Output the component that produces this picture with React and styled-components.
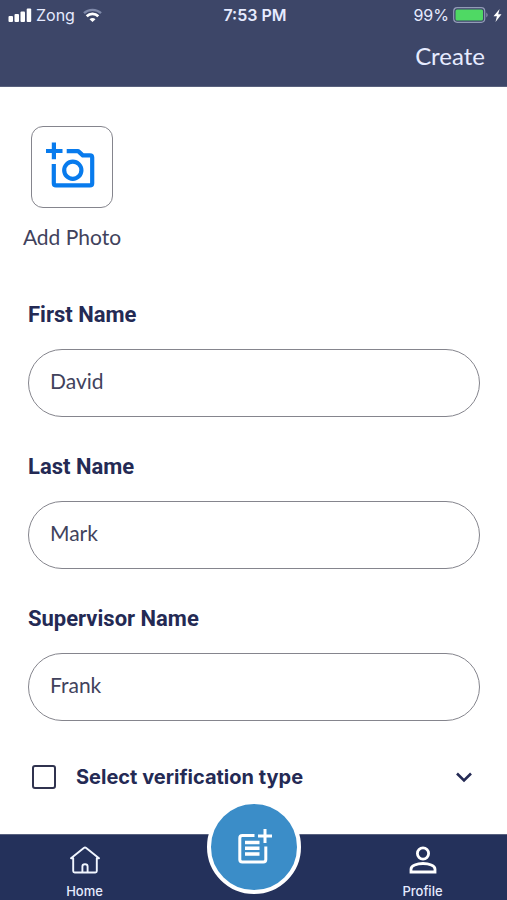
import React from "react";
import styled, { createGlobalStyle } from "styled-components";

const GlobalStyle = createGlobalStyle`
  *, *::before, *::after { box-sizing: border-box; }
  body {
    margin: 0;
    background: #ffffff;
    color: #41425c;
    font-family: Inter, "Liberation Sans", sans-serif;
  }
  button, input { font: inherit; color: inherit; }
`;

const Screen = styled.div`
  min-height: 100vh;
  display: flex;
  flex-direction: column;
`;

const Header = styled.header`
  background: #3d4668;
  color: #e6ebff;
  padding-bottom: 12px;
  border-bottom: 1px solid #59617d;
`;

const StatusBar = styled.div`
  display: grid;
  grid-template-columns: 1fr auto 1fr;
  align-items: center;
  height: 30px;
  padding: 0 5px 0 8px;
  font-size: 16px;
  line-height: 20px;
`;

const StatusGroup = styled.div`
  display: flex;
  align-items: center;
  justify-content: ${(p) => (p.$end ? "flex-end" : "flex-start")};
  gap: 4px;
`;

const Clock = styled.time`
  font-weight: 600;
`;

const WifiSlot = styled.span`
  display: flex;
  padding-left: 4px;
`;

const TitleBar = styled.div`
  display: flex;
  justify-content: flex-end;
  align-items: center;
  height: 44px;
  padding: 8px 22px 0;
`;

const CreateButton = styled.button`
  border: 0;
  padding: 0;
  background: none;
  font-family: Lato, sans-serif;
  font-size: 24px;
  line-height: 28px;
  cursor: pointer;
`;

const Form = styled.form`
  flex: 1;
  padding: 39px 27px 24px 28px;
`;

const PhotoButton = styled.button`
  display: flex;
  flex-direction: column;
  align-items: center;
  gap: 17px;
  width: 98px;
  margin-left: -5px;
  padding: 0;
  border: 0;
  background: none;
  font-family: Lato, sans-serif;
  font-size: 21px;
  line-height: 24px;
  white-space: nowrap;
  cursor: pointer;
`;

const PhotoFrame = styled.span`
  display: grid;
  place-items: center;
  width: 82px;
  height: 82px;
  border: 1px solid #85858d;
  border-radius: 12px;
`;

const Fields = styled.div`
  display: flex;
  flex-direction: column;
  gap: 36px;
  padding-top: 52px;
`;

const Field = styled.div`
  display: flex;
  flex-direction: column;
  gap: 20px;
`;

const FieldLabel = styled.label`
  color: #242a54;
  font-family: Roboto, sans-serif;
  font-size: 22px;
  font-weight: 700;
  line-height: 28px;
`;

const TextInput = styled.input`
  width: 100%;
  height: 68px;
  padding: 0 21px 6px;
  border: 1px solid #85858d;
  border-radius: 34px;
  background: #ffffff;
  font-family: Lato, sans-serif;
  font-size: 21px;
`;

const VerificationRow = styled.div`
  display: flex;
  align-items: center;
  justify-content: space-between;
  margin-top: 43px;
  padding: 0 7px 0 4px;
  color: #242a54;
`;

const CheckLabel = styled.label`
  display: flex;
  align-items: center;
  gap: 20px;
  font-size: 20px;
  font-weight: 700;
  line-height: 26px;
`;

const Checkbox = styled.input`
  appearance: none;
  width: 24px;
  height: 24px;
  margin: 0;
  border: 2px solid #30334f;
  border-radius: 3px;
  &:checked { background: #30334f; }
`;

const ExpandButton = styled.button`
  display: flex;
  padding: 0;
  border: 0;
  background: none;
  cursor: pointer;
`;

const BottomNav = styled.nav`
  position: sticky;
  bottom: 0;
  display: grid;
  grid-template-columns: repeat(3, 1fr);
  height: 66px;
  background: #24315b;
  border-top: 1px solid #58617f;
`;

const NavLink = styled.a`
  display: flex;
  flex-direction: column;
  align-items: center;
  gap: 9px;
  padding-top: 11px;
  color: #e6ebff;
  font-size: 13px;
  font-weight: 500;
  line-height: 16px;
  text-decoration: none;
`;

const AddButton = styled.button`
  display: grid;
  place-items: center;
  justify-self: center;
  width: 94px;
  height: 94px;
  margin-top: -35px;
  padding: 0;
  border: 4px solid #ffffff;
  border-radius: 50%;
  background: #3b8dc8;
  cursor: pointer;
`;

const SignalIcon = () => (
  <svg width="24" height="14" viewBox="0 0 24 14" fill="#fff" aria-hidden="true">
    <rect x="0.5" y="8" width="4.5" height="6" rx="1" />
    <rect x="6.5" y="6" width="4.5" height="8" rx="1" />
    <rect x="12.5" y="3.5" width="4.5" height="10.5" rx="1" />
    <rect x="18.7" y="0.5" width="4.5" height="13.5" rx="1" />
  </svg>
);

const WifiIcon = () => (
  <svg width="19" height="14" viewBox="0 0 19 14" fill="none" strokeWidth="2.4" aria-hidden="true">
    <path d="M1 5.1C5.7 .8 13.3 .8 18 5.1" stroke="#7f89a9" />
    <path d="M3.700 8.200c3.200-3 8.400-3 11.600 0" stroke="#fff" strokeWidth="2.800" />
    <path d="M6.500 11.200c1.700-1.500 4.300-1.500 6 0L9.500 14z" fill="#fff" />
  </svg>
);

const BatteryIcon = () => (
  <svg width="36" height="16" viewBox="0 0 36 16" aria-hidden="true">
    <rect x="0.7" y="0.7" width="31" height="14.6" rx="3.5" fill="none" stroke="#929bb7" strokeWidth="1.2" />
    <rect x="2.5" y="2.5" width="27.5" height="11" rx="1.5" fill="#4fd964" />
    <path d="M33.5 5.5q2 2.5 0 5z" fill="#a5adc5" />
  </svg>
);

const BoltIcon = () => (
  <svg width="9" height="13" viewBox="0 0 9 13" fill="#fff" aria-hidden="true">
    <path d="M6.6 0 .5 7.3h3.4L2.500 13l6-7.700H5.200z" />
  </svg>
);

const CameraPlusIcon = () => (
  <svg width="52" height="50" viewBox="0 0 52 50" fill="none" stroke="#087bed" strokeWidth="4.2" aria-hidden="true">
    <path d="M0 9h16.500M7.900.6v16.600" />
    <path d="M20.700 9.100h11.500l4.600 4.300H44q2.200 0 2.200 2.200v25.600q0 2.200-2.200 2.200H10q-2.200 0-2.200-2.200V22" strokeLinejoin="round" />
    <circle cx="26.800" cy="28.200" r="8.600" />
  </svg>
);

const ChevronIcon = () => (
  <svg width="18" height="12" viewBox="0 0 18 12" fill="none" stroke="#242a54" strokeWidth="2.6" aria-hidden="true">
    <path d="M2 2.500l7 7 7-7" />
  </svg>
);

const HomeIcon = () => (
  <svg width="30" height="28" viewBox="0 0 30 28" fill="none" stroke="#f1f6ff" strokeWidth="1.9" strokeLinecap="round" strokeLinejoin="round" aria-hidden="true">
    <path d="M1 12.200h2.200V25q0 1.500 1.500 1.500h20.600q1.500 0 1.500-1.500V12.200H29L16.200 2q-1.200-.9-2.400 0z" />
    <path d="M12.400 26v-5.500q0-2.300 2.600-2.300t2.600 2.300V26" />
  </svg>
);

const ProfileIcon = () => (
  <svg width="28" height="28" viewBox="0 0 28 28" fill="none" stroke="#fff" strokeWidth="2.8" aria-hidden="true">
    <circle cx="14" cy="7.500" r="5.600" />
    <path d="M2 26v-2.800c0-3.500 6-5.700 12-5.700s12 2.200 12 5.700V26z" />
  </svg>
);

const PostAddIcon = () => (
  <svg width="36" height="38" viewBox="0 -2 36 38" fill="none" stroke="#fff" strokeWidth="3" aria-hidden="true">
    <path d="M18.500 5.500H6.300q-2.500 0-2.500 2.500v21.500q0 2.500 2.500 2.500h21q2.500 0 2.500-2.500V16.500" />
    <path d="M22 6h14M29 -1v14" />
    <path d="M9 12.500h14.500M9 18.200h14.500M9 24h14.500" strokeWidth="3.600" />
  </svg>
);

const FIELDS = [
  { id: "first-name", label: "First Name", value: "David" },
  { id: "last-name", label: "Last Name", value: "Mark" },
  { id: "supervisor-name", label: "Supervisor Name", value: "Frank" },
];

export default function App() {
  return (
    <Screen>
      <GlobalStyle />
      <Header>
        <StatusBar>
          <StatusGroup>
            <SignalIcon />
            <span>Zong</span>
            <WifiSlot><WifiIcon /></WifiSlot>
          </StatusGroup>
          <Clock>7:53 PM</Clock>
          <StatusGroup $end>
            <span>99%</span>
            <BatteryIcon />
            <BoltIcon />
          </StatusGroup>
        </StatusBar>
        <TitleBar>
          <CreateButton type="submit" form="profile-form">Create</CreateButton>
        </TitleBar>
      </Header>
      <Form id="profile-form" onSubmit={(e) => e.preventDefault()}>
        <PhotoButton type="button">
          <PhotoFrame><CameraPlusIcon /></PhotoFrame>
          Add Photo
        </PhotoButton>
        <Fields>
          {FIELDS.map((f) => (
            <Field key={f.id}>
              <FieldLabel htmlFor={f.id}>{f.label}</FieldLabel>
              <TextInput id={f.id} type="text" defaultValue={f.value} />
            </Field>
          ))}
        </Fields>
        <VerificationRow>
          <CheckLabel>
            <Checkbox type="checkbox" />
            Select verification type
          </CheckLabel>
          <ExpandButton type="button" aria-label="Show verification types">
            <ChevronIcon />
          </ExpandButton>
        </VerificationRow>
      </Form>
      <BottomNav>
        <NavLink href="#home"><HomeIcon />Home</NavLink>
        <AddButton type="button" aria-label="Add entry"><PostAddIcon /></AddButton>
        <NavLink href="#profile"><ProfileIcon />Profile</NavLink>
      </BottomNav>
    </Screen>
  );
}
